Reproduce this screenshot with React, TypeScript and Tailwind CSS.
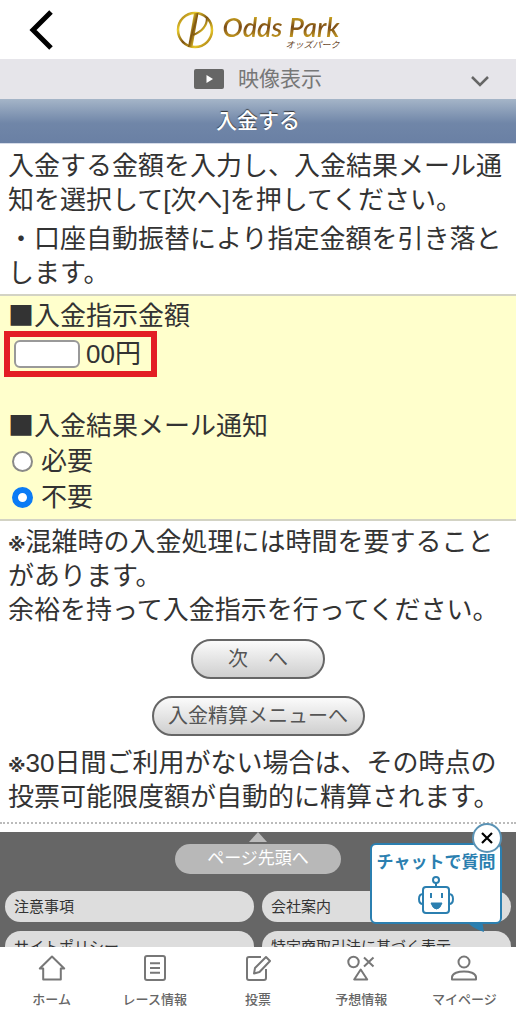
import { useState } from "react";
import type { ReactNode } from "react";

interface NavItem {
    label: string;
    icon: ReactNode;
}

const navItems: NavItem[] = [
    {
        label: "ホーム",
        icon: <path d="M14 2.5 L1.8 14.5 H5.2 V25.5 H22.8 V14.5 H26.2 Z" />
    },
    {
        label: "レース情報",
        icon: <>
            <rect x="4" y="2" width="20" height="24" rx="2" />
            <path d="M9 9.3 H19 M9 14 H19 M9 18.7 H19" />
        </>
    },
    {
        label: "投票",
        icon: <>
            <path d="M17 3 H5 Q3 3 3 5 V24 Q3 26 5 26 H20 Q22 26 22 24 V15" />
            <path d="M10 19.5 L11 14 L22 3 L26 7 L15.5 18 Z" />
        </>
    },
    {
        label: "予想情報",
        icon: <>
            <circle cx="6.5" cy="8" r="5.2" />
            <path d="M17 3.5 L26.5 12.5 M26.5 3.5 L17 12.5" />
            <path d="M13.7 15.5 L7.2 25.5 H20.2 Z" />
        </>
    },
    {
        label: "マイページ",
        icon: <>
            <circle cx="14" cy="8" r="5.5" />
            <path d="M2 25.5 V23 C3 15.5 25 15.5 26 23 V25.5 Z" />
        </>
    }
];

const footerLinks = ["注意事項", "会社案内", "サイトポリシー", "特定商取引法に基づく表示"];

function Logo() {
    return (
        <a href="#home" className="flex items-center gap-2">
            <svg width="38" height="38" viewBox="0 0 38 38" fill="none">
                <defs>
                    <linearGradient id="gold" x1="0" y1="0" x2="1" y2="1">
                        <stop offset="0" stopColor="#8a5a10" />
                        <stop offset="0.25" stopColor="#e8cb2c" />
                        <stop offset="0.5" stopColor="#7c5210" />
                        <stop offset="0.75" stopColor="#e6c628" />
                        <stop offset="1" stopColor="#8a5a10" />
                    </linearGradient>
                </defs>
                <circle cx="19" cy="19" r="17" stroke="url(#gold)" strokeWidth="2.5" />
                <path d="M18 2 L22.5 2 L16.5 36 L12 36 Z" fill="url(#gold)" />
                <path d="M31 7 C31 16 25 21 17 24" stroke="url(#gold)" strokeWidth="2.2" />
            </svg>
            <span className="flex flex-col pt-1.5">
                <span className="bg-linear-to-b from-[#d8b41c] via-[#7a4a16] to-[#d0a820] bg-clip-text font-[Lato,sans-serif] text-[27px] leading-6 font-semibold text-transparent italic">
                    Odds Park
                </span>
                <span className="self-end text-[9px] leading-3 text-[#6b4a2c] italic">オッズパーク</span>
            </span>
        </a>
    );
}

function NoteMark() {
    return <span className="font-['DejaVu_Sans',sans-serif] text-lg leading-none font-bold">※</span>;
}

function ChatBanner({ onClose }: { onClose: () => void }) {
    return (
        <div className="absolute right-3.5 bottom-[23px] h-[81px] w-[132px]">
            <svg className="absolute top-[78px] right-4" width="20" height="12" viewBox="0 0 20 12">
                <path d="M0 0 H16 L18 11 Q8 8 2 2 Z" fill="#2b7fb0" />
            </svg>
            <a
                href="#chat"
                className="relative flex h-full flex-col items-center rounded-md border-2 border-[#2b7fb0] bg-white pt-1.5 text-[17px] leading-6 font-bold text-[#2b7fb0]">
                チャットで質問
                <svg width="38" height="40" viewBox="0 0 38 40" fill="none" stroke="#2b7fb0" strokeWidth="2">
                    <circle cx="19" cy="5" r="3" />
                    <path d="M19 8 V12" />
                    <rect x="6" y="12" width="26" height="26" rx="3" />
                    <path d="M6 19 Q2 19 2 24 Q2 29 6 29 M32 19 Q36 19 36 24 Q36 29 32 29" />
                    <path d="M14 18 V23 M25 18 V23" />
                    <path d="M14 28 H25 Q23 34 19.5 34 Q16 34 14 28 Z" fill="#2b7fb0" strokeWidth="1" />
                </svg>
            </a>
            <button
                type="button"
                aria-label="閉じる"
                onClick={onClose}
                className="absolute -top-5 right-0 flex size-[30px] items-center justify-center rounded-full border-2 border-[#5b93b5] bg-white">
                <svg width="12" height="12" viewBox="0 0 12 12" stroke="#000" strokeWidth="2.2">
                    <path d="M1 1 L11 11 M11 1 L1 11" />
                </svg>
            </button>
        </div>
    );
}

export default function App() {
    const [amount, setAmount] = useState("");
    const [notice, setNotice] = useState("off");
    const [showChat, setShowChat] = useState(true);

    const pillButton =
        "h-10 rounded-full border-2 border-[#666] bg-linear-to-b from-[#fbfbfb] to-[#cfcfcf] text-[20px] leading-6 text-[#555]";
    const radio =
        "size-[21px] appearance-none rounded-full border-2 border-[#8a8a88] bg-white checked:border-[6px] checked:border-[#0b7bf5]";

    return (
        <div className="flex h-dvh flex-col bg-white font-['Liberation_Sans','Noto_Sans_CJK_JP',sans-serif] text-[#333]">
            <div className="relative min-h-0 flex-1">
                <div className="h-full overflow-y-auto [scrollbar-width:none]">
                    <header className="grid h-[59px] grid-cols-[1fr_auto_1fr] items-center">
                        <button type="button" aria-label="戻る" className="ml-7 w-fit">
                            <svg width="26" height="42" viewBox="0 0 26 42" fill="none" stroke="#000" strokeWidth="5">
                                <path d="M23 3 L5 21 L23 39" />
                            </svg>
                        </button>
                        <Logo />
                    </header>

                    <button
                        type="button"
                        className="grid h-10 w-full grid-cols-[1fr_auto_1fr] items-center bg-[#e6e5ea] text-[21px] leading-8 text-[#777]">
                        <span />
                        <span className="flex items-center gap-3.5">
                            <svg width="30" height="20" viewBox="0 0 30 20">
                                <rect width="30" height="20" rx="2" fill="#666" />
                                <path d="M12.5 6 L19 10 L12.5 14 Z" fill="#fff" />
                            </svg>
                            映像表示
                        </span>
                        <svg className="mt-1 mr-[26px] justify-self-end" width="20" height="12" viewBox="0 0 20 12" fill="none" stroke="#666" strokeWidth="2.5">
                            <path d="M2 2 L10 10 L18 2" />
                        </svg>
                    </button>

                    <h1 className="flex h-[45px] items-center justify-center border-b border-[#d5dbe8] bg-linear-to-b from-[#a5b5c8] via-[#7086a8] via-55% to-[#6a80a4] text-[21px] leading-8 font-medium text-white [text-shadow:0_-1px_1px_#333]">
                        入金する
                    </h1>

                    <main className="text-[26px] leading-[34px]">
                        <div className="flex flex-col gap-[5px] px-2 pt-[5px] pb-1">
                            <p>入金する金額を入力し、入金結果メール通知を選択して[次へ]を押してください。</p>
                            <p>・口座自動振替により指定金額を引き落とします。</p>
                        </div>

                        <form className="border-y-2 border-[#d3d3c4] bg-[#ffffcc] px-2 pt-px pb-1">
                            <h2 className="font-['Noto_Sans_CJK_JP',sans-serif]">■入金指示金額</h2>
                            <label className="-ml-1 flex h-[46px] w-[153px] items-center gap-1.5 border-6 border-[#e31e24]">
                                <input
                                    type="text"
                                    inputMode="numeric"
                                    aria-label="入金指示金額"
                                    value={amount}
                                    onChange={e => setAmount(e.target.value)}
                                    className="ml-1 h-7 w-[66px] rounded-md border-2 border-[#999] bg-white px-1 text-xl"
                                />
                                00円
                            </label>
                            <fieldset className="mt-[30px]">
                                <legend className="pb-0.5 font-['Noto_Sans_CJK_JP',sans-serif]">■入金結果メール通知</legend>
                                <label className="flex h-9 items-center gap-2 pl-1">
                                    <input type="radio" name="notice" className={radio} checked={notice === "on"} onChange={() => setNotice("on")} />
                                    必要
                                </label>
                                <label className="flex h-9 items-center gap-2 pl-1">
                                    <input type="radio" name="notice" className={radio} checked={notice === "off"} onChange={() => setNotice("off")} />
                                    不要
                                </label>
                            </fieldset>
                        </form>

                        <p className="px-2 pt-1">
                            <NoteMark />
                            混雑時の入金処理には時間を要することがあります。
                            <br />
                            余裕を持って入金指示を行ってください。
                        </p>

                        <div className="flex flex-col items-center gap-[17px] pt-3 pb-2.5">
                            <button type="button" className={`${pillButton} w-[134px]`}>次　へ</button>
                            <button type="button" className={`${pillButton} w-[213px]`}>入金精算メニューへ</button>
                        </div>

                        <p className="border-b-2 border-dotted border-[#bbb] px-2 pb-2">
                            <NoteMark />
                            30日間ご利用がない場合は、その時点の投票可能限度額が自動的に精算されます。
                        </p>
                    </main>

                    <footer className="mt-2 bg-[#666] px-[5px] pb-4">
                        <a href="#top" className="flex flex-col items-center gap-0.5 text-[17px] leading-[30px] text-white">
                            <svg width="18" height="10" viewBox="0 0 18 10">
                                <path d="M9 0 L18 10 H0 Z" fill="#bbb" />
                            </svg>
                            <span className="h-[30px] w-[166px] rounded-full bg-[#b8b8b8] text-center">ページ先頭へ</span>
                        </a>
                        <ul className="mt-[17px] grid grid-cols-2 gap-x-2 gap-y-[9px] text-[15px] leading-[31px]">
                            {footerLinks.map(link => <li key={link}>
                                <a href="#info" className="block rounded-2xl bg-[#ddd] px-[9px]">{link}</a>
                            </li>)}
                        </ul>
                    </footer>
                </div>
                {showChat && <ChatBanner onClose={() => setShowChat(false)} />}
            </div>

            <nav className="grid h-[77px] grid-cols-5 bg-white pt-[7px]">
                {navItems.map(item => <a
                    key={item.label}
                    href="#nav"
                    className="flex flex-col items-center gap-2 text-[13px] leading-5 font-medium text-[#666]">
                    <svg width="28" height="28" viewBox="0 0 28 28" fill="none" stroke="#777" strokeWidth="2" strokeLinejoin="round">
                        {item.icon}
                    </svg>
                    {item.label}
                </a>)}
            </nav>
        </div>
    );
}
